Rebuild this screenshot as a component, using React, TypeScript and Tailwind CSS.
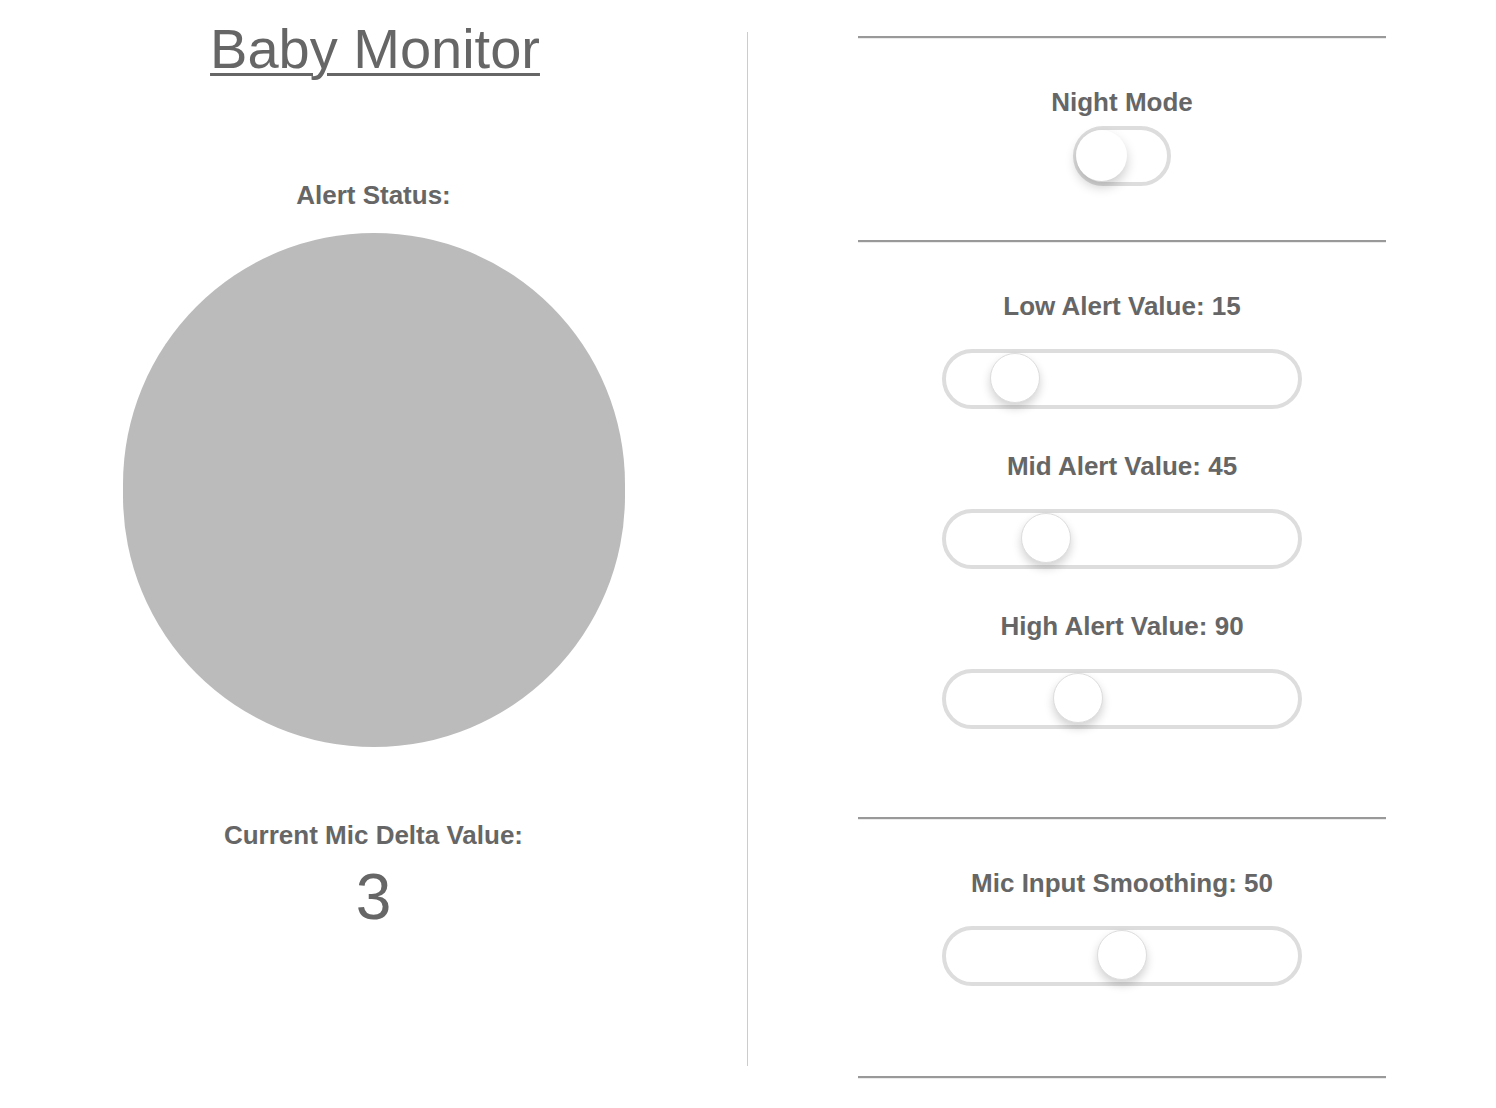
const sliders = [
  { label: "Low Alert Value", value: 15, pos: 44 },
  { label: "Mid Alert Value", value: 45, pos: 75 },
  { label: "High Alert Value", value: 90, pos: 107 },
];

function Rule({ className }: { className?: string }) {
  return (
    <div
      className={`w-[528px] h-[3px] border-t-2 border-t-[#999] border-b border-b-[#ebebeb] ${className ?? ""}`}
    />
  );
}

function Label({ text, className }: { text: string; className?: string }) {
  return (
    <div className={`text-[26px] font-bold leading-[30px] text-[#666] ${className ?? ""}`}>
      {text}
    </div>
  );
}

function Slider({ pos, className }: { pos: number; className?: string }) {
  return (
    <div
      className={`relative w-[360px] h-[60px] rounded-full border-4 border-[#ddd] bg-white ${className ?? ""}`}
    >
      <div
        className="absolute top-0 w-[50px] h-[50px] rounded-full bg-white border border-[#ddd] shadow-[0_5px_10px_rgba(0,0,0,0.18)]"
        style={{ left: pos }}
      />
    </div>
  );
}

export default function App() {
  return (
    <div className="w-[1496px] h-[1108px] bg-white flex font-['Liberation_Sans',Arial,sans-serif] text-[#666]">
      {/* Left: monitor */}
      <div className="w-[747px] flex flex-col items-center">
        <h1 className="mt-[17px] ml-[3px] text-[56px] leading-[64px] underline underline-offset-[5px] decoration-[3px]">
          Baby Monitor
        </h1>
        <Label text="Alert Status:" className="mt-[99px]" />
        <div className="mt-[23px] w-[502px] h-[514px] rounded-full bg-[#bbb]" />
        <Label text="Current Mic Delta Value:" className="mt-[73px]" />
        <div className="mt-[10px] text-[64px] leading-[74px]">3</div>
      </div>

      <div className="w-px mt-[32px] h-[1034px] bg-[#ccc]" />

      {/* Right: settings */}
      <div className="flex-1 flex flex-col items-center">
        <Rule className="mt-[36px]" />
        <Label text="Night Mode" className="mt-[48px]" />
        <div className="relative mt-[9px] w-[98px] h-[60px] rounded-full border-4 border-[#ddd] bg-white">
          <div className="absolute -left-px top-0 w-[51px] h-[51px] rounded-full bg-white shadow-[0_6px_12px_rgba(0,0,0,0.2)]" />
        </div>

        <Rule className="mt-[54px]" />
        {sliders.map((s, idx) => (
          <div key={idx} className="flex flex-col items-center">
            <Label
              text={`${s.label}: ${s.value}`}
              className={idx === 0 ? "mt-[48px]" : "mt-[42px]"}
            />
            <Slider pos={s.pos} className="mt-[28px]" />
          </div>
        ))}

        <Rule className="mt-[88px]" />
        <Label text="Mic Input Smoothing: 50" className="mt-[48px]" />
        <Slider pos={151} className="mt-[28px]" />
        <Rule className="mt-[90px]" />
      </div>
    </div>
  );
}
